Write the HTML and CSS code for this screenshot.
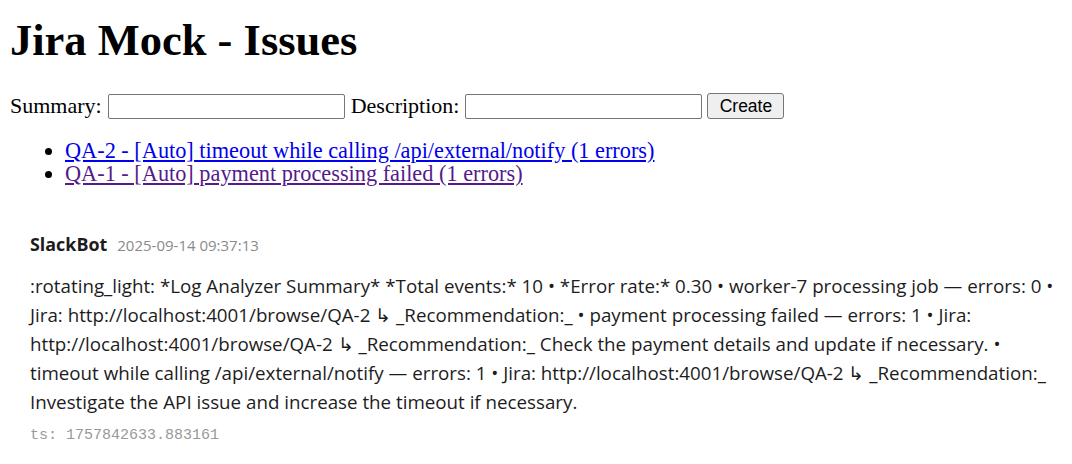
FILE: index.html
```html
<!DOCTYPE html>
<html lang="en">
<head>
<meta charset="utf-8">
<title>Jira Mock - Issues</title>
<link rel="stylesheet" href="styles.css">
</head>
<body>
<h1 class="page-title">Jira Mock - Issues</h1>
<form class="create-form">
  <label class="field"><span>Summary:</span><input type="text" class="text-input"></label>
  <label class="field"><span>Description:</span><input type="text" class="text-input"></label>
  <button type="button" class="btn">Create</button>
</form>
<ul class="issues">
  <li><a href="#qa-2" class="issue-link">QA-2 - [Auto] timeout while calling /api/external/notify (1 errors)</a></li>
  <li><a href="#qa-1" class="issue-link visited">QA-1 - [Auto] payment processing failed (1 errors)</a></li>
</ul>
<div class="slack">
  <div class="msg-head">
    <span class="author">SlackBot</span>
    <span class="time">2025-09-14 09:37:13</span>
  </div>
  <div class="msg-text">:rotating_light: *Log Analyzer Summary* *Total events:* 10 • *Error rate:* 0.30 • worker-7 processing job — errors: 0 •<br>Jira: http://localhost:4001/browse/QA-2 ↳ _Recommendation:_ • payment processing failed — errors: 1 • Jira:<br>http://localhost:4001/browse/QA-2 ↳ _Recommendation:_ Check the payment details and update if necessary. •<br>timeout while calling /api/external/notify — errors: 1 • Jira: http://localhost:4001/browse/QA-2 ↳ _Recommendation:_<br>Investigate the API issue and increase the timeout if necessary.</div>
  <div class="ts">ts: 1757842633.883161</div>
</div>
</body>
</html>
```
FILE: styles.css
```css
html, body {
  background: #ffffff;
}
body {
  margin: 0 10px 10px 10px;
  font-family: "Liberation Serif", "Times New Roman", serif;
  font-size: 22px;
  color: #000;
}
.page-title {
  margin: 17px 0 30px 0;
  font-size: 44.5px;
  line-height: 46px;
  font-weight: bold;
}
.create-form {
  display: flex;
  align-items: center;
  gap: 5px;
  margin: 0;
  height: 26px;
}
.field {
  display: flex;
  align-items: center;
  gap: 6px;
  line-height: 26px;
}
.field + .field {
  margin-left: 1px;
}
.text-input {
  box-sizing: border-box;
  width: 237px;
  height: 25px;
  margin: 0;
  padding: 1px 3px;
  border: 1px solid #767676;
  border-radius: 2px;
  background: #fff;
  font-family: "Liberation Sans", Arial, sans-serif;
  font-size: 17px;
}
.btn {
  box-sizing: border-box;
  width: 77px;
  height: 26px;
  margin: 0;
  padding: 0 8px;
  border: 1px solid #767676;
  border-radius: 3px;
  background: #efefef;
  color: #000;
  font-family: "Liberation Sans", Arial, sans-serif;
  font-size: 17.5px;
}
.issues {
  margin: 20px 0 0 0;
  padding-left: 55px;
  font-size: 22.3px;
  line-height: 23px;
  list-style: disc;
}
.issue-link {
  color: #0000ee;
  text-decoration: underline;
}
.issue-link.visited {
  color: #551a8b;
}
.slack {
  margin-top: 47px;
  padding: 0 0 0 20px;
  font-family: "Open Sans", "Noto Sans", sans-serif;
  color: #1d1c1d;
}
.msg-head {
  display: flex;
  align-items: baseline;
  gap: 10px;
  line-height: 25px;
}
.author {
  font-size: 17.9px;
  font-weight: 700;
  color: #1d1c1d;
}
.time {
  font-size: 15px;
  color: #8a8a8a;
}
.msg-text {
  margin-top: 13px;
  font-size: 18.75px;
  line-height: 29px;
  white-space: nowrap;
}
.ts {
  margin-top: 11px;
  font-family: "Liberation Mono", "Courier New", monospace;
  font-size: 15px;
  line-height: 18px;
  color: #999999;
}
```
